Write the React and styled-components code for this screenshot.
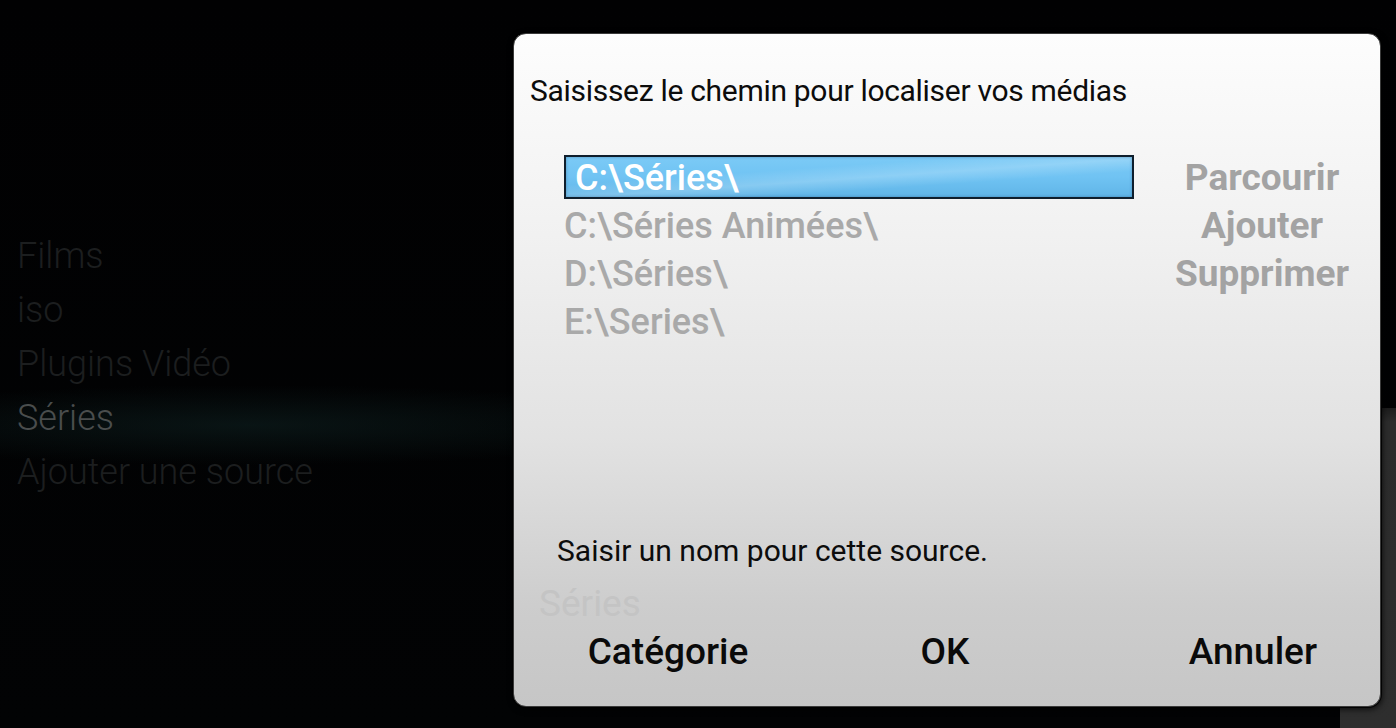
import React from "react";
import styled, { createGlobalStyle, css } from "styled-components";

const Global = createGlobalStyle`
  html, body {
    margin: 0;
    padding: 0;
    background: #000;
    overflow: hidden;
  }
  body {
    font-family: Roboto, "Noto Sans", "Liberation Sans", sans-serif;
  }
`;

const Screen = styled.div`
  position: relative;
  width: 1396px;
  height: 728px;
  overflow: hidden;
  background:
    radial-gradient(ellipse 460px 40px at 250px 425px, rgba(14, 32, 32, 0.6), rgba(0, 0, 0, 0) 100%),
    linear-gradient(180deg, #010102 0%, #020304 100%);
`;

const SideMenu = styled.nav`
  display: flex;
  flex-direction: column;
  padding: 229px 0 0 17px;
`;

const MenuItem = styled.div`
  height: 54px;
  line-height: 54px;
  font-size: 36px;
  font-weight: 300;
  color: ${(p) => (p.$active ? "#4a4d4d" : "#1c1e1f")};
  white-space: nowrap;
`;

const BackPanel = styled.div`
  position: absolute;
  left: 1340px;
  top: 408px;
  width: 56px;
  height: 320px;
  background: linear-gradient(180deg, #1c1c1c 0px, #2c2c2c 14px, #2e2e2e 100%);
`;

const Dialog = styled.section`
  position: absolute;
  left: 513px;
  top: 33px;
  width: 868px;
  height: 674px;
  box-sizing: border-box;
  border-radius: 13px;
  border: 1.5px solid #3a3a3a;
  background: linear-gradient(180deg, #fdfdfd 0%, #f1f1f1 30%, #e2e2e2 60%, #cdcdcd 85%, #c6c6c6 100%);
  box-shadow: 0 0 0 1px rgba(0, 0, 0, 0.9), 1px 2px 6px rgba(0, 0, 0, 0.8);
  display: flex;
  flex-direction: column;
  padding: 37px 0 0 16px;
`;

const Title = styled.h1`
  margin: 0;
  font-size: 30px;
  font-weight: 400;
  letter-spacing: -0.3px;
  line-height: 40px;
  color: #0c0c0c;
  white-space: nowrap;
`;

const Body = styled.div`
  display: flex;
  align-items: flex-start;
  margin-top: 44px;
`;

const PathList = styled.ul`
  list-style: none;
  margin: 0 0 0 34px;
  padding: 0;
  width: 570px;
  display: flex;
  flex-direction: column;
  gap: 4px;
`;

const PathItem = styled.li`
  box-sizing: border-box;
  height: 44px;
  line-height: 40px;
  padding-left: 0;
  font-size: 36px;
  font-weight: 500;
  color: #a9a9a9;
  white-space: nowrap;
  ${(p) =>
    p.$selected
      ? css`
          padding-left: 9px;
          line-height: 42px;
          color: #ffffff;
          border: 2px solid #0f1e2c;
          background:
            linear-gradient(176deg, rgba(255, 255, 255, 0) 35%, rgba(255, 255, 255, 0.2) 52%, rgba(255, 255, 255, 0) 68%),
            linear-gradient(180deg, #7bcaf6 0%, #70c3f3 50%, #60b5e7 100%);
          box-shadow: inset 0 0 3px rgba(0, 40, 80, 0.35);
        `
      : css`
          padding-top: 3px;
        `}
`;

const Actions = styled.div`
  display: flex;
  flex-direction: column;
  align-items: center;
  gap: 4px;
  width: 232px;
  margin-left: 12px;
`;

const ActionButton = styled.div`
  height: 44px;
  line-height: 46px;
  font-size: 37px;
  font-weight: 700;
  color: #a3a3a3;
  white-space: nowrap;
`;

const Spacer = styled.div`
  flex: 1;
`;

const NameLabel = styled.div`
  margin-left: 27px;
  font-size: 30px;
  font-weight: 400;
  line-height: 36px;
  color: #0c0c0c;
  white-space: nowrap;
`;

const NameInput = styled.div`
  margin: 17px 0 0 9px;
  font-size: 37px;
  font-weight: 400;
  line-height: 36px;
  color: #c4c4c4;
`;

const ButtonRow = styled.div`
  display: grid;
  grid-template-columns: 276px 278px 1fr;
  align-items: center;
  margin-top: 7px;
  padding-bottom: 31px;
`;

const DialogButton = styled.div`
  font-size: 37px;
  font-weight: 500;
  line-height: 46px;
  color: #0a0a0a;
  text-align: ${(p) => p.$align || "center"};
  padding-right: ${(p) => (p.$align === "right" ? "63px" : "0")};
  white-space: nowrap;
`;

const menu = ["Films", "iso", "Plugins Vidéo", "Séries", "Ajouter une source"];
const paths = ["C:\\Séries\\", "C:\\Séries Animées\\", "D:\\Séries\\", "E:\\Series\\"];
const actions = ["Parcourir", "Ajouter", "Supprimer"];

export default function App() {
  return (
    <Screen>
      <Global />
      <SideMenu>
        {menu.map((m) => (
          <MenuItem key={m} $active={m === "Séries"}>
            {m}
          </MenuItem>
        ))}
      </SideMenu>
      <BackPanel />
      <Dialog>
        <Title>Saisissez le chemin pour localiser vos médias</Title>
        <Body>
          <PathList>
            {paths.map((p, i) => (
              <PathItem key={p} $selected={i === 0}>
                {p}
              </PathItem>
            ))}
          </PathList>
          <Actions>
            {actions.map((a) => (
              <ActionButton key={a}>{a}</ActionButton>
            ))}
          </Actions>
        </Body>
        <Spacer />
        <NameLabel>Saisir un nom pour cette source.</NameLabel>
        <NameInput>Séries</NameInput>
        <ButtonRow>
          <DialogButton>Catégorie</DialogButton>
          <DialogButton>OK</DialogButton>
          <DialogButton $align="right">Annuler</DialogButton>
        </ButtonRow>
      </Dialog>
    </Screen>
  );
}
